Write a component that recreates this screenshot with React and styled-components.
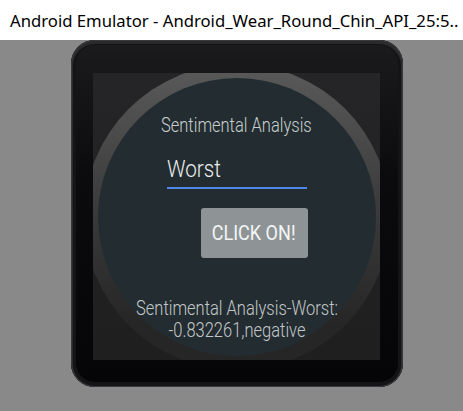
import React from "react";
import styled, { createGlobalStyle } from "styled-components";

const GlobalStyle = createGlobalStyle`
  html, body {
    margin: 0;
    padding: 0;
  }
  body {
    width: 463px;
    height: 411px;
    overflow: hidden;
    background: #898989;
  }
`;

const Window = styled.div`
  width: 463px;
  height: 411px;
  display: flex;
  flex-direction: column;
`;

const TitleBar = styled.div`
  height: 40px;
  flex: none;
  background: #fff;
  display: flex;
  align-items: center;
  padding-left: 10px;
  font-family: "Noto Sans", "Open Sans", sans-serif;
  font-size: 16.7px;
  color: #000;
  white-space: nowrap;
  overflow: hidden;
`;

const Stage = styled.div`
  flex: 1;
  background: #898989;
  padding-left: 71px;
`;

const Device = styled.div`
  width: 332px;
  height: 347px;
  box-sizing: border-box;
  padding: 33px 23px 27px 22px;
  border-radius: 24px;
  background: linear-gradient(#1b1b1e, #0b0b0e 40%, #050507);
  box-shadow: inset 0 0 0 1px #3a3a3d, inset 0 2px 0 2px #2a2a2d,
    inset 0 0 0 5px #141417;
`;

const Screen = styled.div`
  width: 287px;
  height: 287px;
  background: linear-gradient(#252527, #1f1f1f);
  overflow: hidden;
  display: flex;
  align-items: center;
  justify-content: center;
`;

const Ring = styled.div`
  flex: none;
  width: 306px;
  height: 306px;
  border-radius: 50%;
  background: linear-gradient(#5a5a5a, #3c3c3c 45%, #262626 85%);
  display: flex;
  align-items: center;
  justify-content: center;
`;

const Face = styled.div`
  flex: none;
  width: 278px;
  height: 278px;
  box-sizing: border-box;
  border-radius: 50%;
  background: #232d31;
  padding-top: 35px;
  display: flex;
  flex-direction: column;
  align-items: center;
  font-family: Roboto, "Noto Sans", sans-serif;
`;

const Heading = styled.div`
  font-size: 20px;
  line-height: 24px;
  font-weight: 300;
  color: #c9cdcf;
  white-space: nowrap;
  transform: scaleX(${(p) => p.$sx});
`;

const Form = styled.div`
  width: 140px;
  margin-top: 18px;
  display: flex;
  flex-direction: column;
  align-items: flex-end;
`;

const Field = styled.div`
  align-self: stretch;
  height: 28px;
  padding-bottom: 4px;
  border-bottom: 2px solid #4f86e6;
  font-size: 24px;
  line-height: 28px;
  font-weight: 300;
  color: #eceeef;
  white-space: nowrap;
`;

const FieldText = styled.span`
  display: inline-block;
  transform-origin: left center;
  transform: scaleX(${(p) => p.$sx});
`;

const Button = styled.div`
  width: 107px;
  height: 50px;
  margin-top: 19px;
  margin-right: -1px;
  border-radius: 3px;
  background: #8e9496;
  display: flex;
  align-items: center;
  justify-content: center;
  font-size: 20.5px;
  font-weight: 400;
  color: #f4f5f5;
  white-space: nowrap;
`;

const ButtonText = styled.span`
  display: inline-block;
  transform: scaleX(${(p) => p.$sx});
`;

const Result = styled.div`
  margin-top: 39px;
  width: 260px;
  text-align: center;
  font-size: 20px;
  line-height: 22px;
  font-weight: 300;
  color: #c3c7c9;
  transform: scaleX(${(p) => p.$sx});
`;

export default function App() {
  return (
    <>
      <GlobalStyle />
      <Window>
        <TitleBar>Android Emulator - Android_Wear_Round_Chin_API_25:5..</TitleBar>
        <Stage>
          <Device>
            <Screen>
              <Ring>
                <Face>
                  <Heading $sx={0.825}>Sentimental Analysis</Heading>
                  <Form>
                    <Field>
                      <FieldText $sx={0.86}>Worst</FieldText>
                    </Field>
                    <Button>
                      <ButtonText $sx={0.88}>CLICK ON!</ButtonText>
                    </Button>
                  </Form>
                  <Result $sx={0.825}>
                    Sentimental Analysis-Worst:
                    <br />
                    -0.832261,negative
                  </Result>
                </Face>
              </Ring>
            </Screen>
          </Device>
        </Stage>
      </Window>
    </>
  );
}
